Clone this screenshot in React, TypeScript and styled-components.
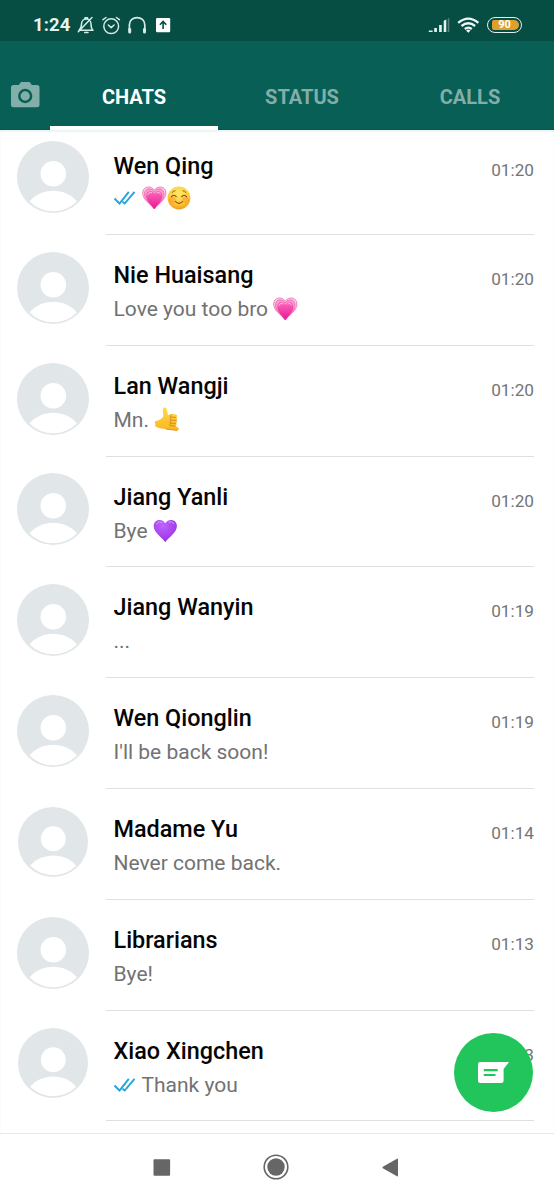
import React from 'react';
import styled, { createGlobalStyle } from 'styled-components';

const GlobalStyle = createGlobalStyle`
  * { box-sizing: border-box; }
  body { margin: 0; background: #fff; font-family: Roboto, "Liberation Sans", sans-serif; }
  svg { display: block; flex: none; overflow: visible; }
`;

const Screen = styled.div`
  position: relative;
  width: 554px;
  height: 1200px;
  display: flex;
  flex-direction: column;
  overflow: hidden;
  background: #fff;
`;

const StatusBar = styled.div`
  flex: none;
  height: 41px;
  padding: 9px 33px 0 33px;
  background: #064d44;
  display: flex;
  justify-content: space-between;
`;

const StatusGroup = styled.div`
  display: flex;
  align-items: center;
  height: 32px;
`;

const Clock = styled.span`
  width: 44px;
  font-size: 18.5px;
  font-weight: 700;
  letter-spacing: 0.1px;
  line-height: 32px;
  color: #e6f4f1;
`;

const Header = styled.header`
  flex: none;
  height: 89px;
  background: #085f55;
  border-bottom: 1px solid #07554c;
  display: flex;
`;

const CameraButton = styled.div`
  width: 50px;
  padding: 41px 0 0 11px;
`;

const Tab = styled.div<{ $active?: boolean }>`
  width: 168px;
  height: 89px;
  padding-top: 44px;
  text-align: center;
  font-size: 20px;
  line-height: 24px;
  font-weight: 700;
  color: ${p => (p.$active ? '#fff' : '#83aea8')};
  border-bottom: 4px solid ${p => (p.$active ? '#fff' : 'transparent')};
  background-clip: padding-box;
`;

const ChatList = styled.main`
  flex: 1;
  min-height: 0;
  overflow: hidden;
  box-shadow: inset 0 2px 2px #eef3f4;
`;

const Row = styled.div<{ $first?: boolean }>`
  height: ${p => (p.$first ? 105 : 110.8)}px;
  padding-left: 17px;
  padding-right: 20px;
  display: flex;
`;

const AvatarSlot = styled.div<{ $first?: boolean }>`
  width: 89px;
  padding-top: ${p => (p.$first ? 11 : 16.8)}px;
`;

const Body = styled.div<{ $first?: boolean }>`
  flex: 1;
  padding: ${p => (p.$first ? 22 : 26)}px 0 0 7.5px;
  display: flex;
  justify-content: space-between;
  border-bottom: 1px solid #dedfe0;
`;

const Name = styled.div`
  font-size: 23.4px;
  line-height: 28px;
  font-weight: 500;
  color: #050505;
  white-space: nowrap;
`;

const Preview = styled.div<{ $first?: boolean }>`
  margin-top: ${p => (p.$first ? 4 : 6)}px;
  height: 28px;
  display: flex;
  align-items: center;
  font-size: 21px;
  line-height: 28px;
  color: #717273;
  white-space: pre;
`;

const Time = styled.time`
  margin-top: 8px;
  font-size: 17.2px;
  line-height: 20px;
  color: #747576;
`;

const ComposeButton = styled.div`
  position: absolute;
  left: 454px;
  top: 1033px;
  width: 79px;
  height: 79px;
  border-radius: 50%;
  background: #22c55b;
  display: flex;
  align-items: center;
  justify-content: center;
`;

const NavBar = styled.nav`
  flex: none;
  height: 67px;
  border-top: 1px solid #e8e8e8;
  display: flex;
  align-items: center;
  justify-content: space-between;
  padding: 0 156px 0 153px;
`;

const Avatar = ({ size = 72 }: { size?: number }) => (
  <svg width={72} height={72} viewBox="0 0 72 72">
    <g transform={`translate(36 36) scale(${size / 72}) translate(-36 -36)`}>
      <circle cx="36" cy="36" r="36" fill="#e1e6e9" />
      <circle cx="36.3" cy="32.7" r="12.8" fill="#fff" />
      <path d="M12.5 60.5C24 46.3 48.5 46.3 60 60.5A34 34 0 0 1 12.5 60.5Z" fill="#fff" />
    </g>
  </svg>
);

const Ticks = () => (
  <svg width="28" height="24" viewBox="0 0 28 24" fill="none" stroke="#24a3dc" strokeWidth="1.9">
    <path d="M0.5 12.5L5.5 17.5L14.8 5.8M8.5 15.7L10.7 17.5L20.5 5.8" />
  </svg>
);

const GrowingHeart = () => (
  <svg width="25" height="24" viewBox="0 0 25 24">
    <defs>
      <linearGradient id="pink" x1="0" y1="0" x2="0" y2="1">
        <stop offset="0" stopColor="#fb69b9" />
        <stop offset="1" stopColor="#e91795" />
      </linearGradient>
    </defs>
    <path d="M12.3 23C9 18 .7 14.2.7 7.1C.7-.1 9.4-.8 12.3 4.3C15.2-.8 23.9-.1 23.9 7.1C23.9 14.2 15.6 18 12.3 23Z" fill="#ffd4ec" stroke="#ed65ae" strokeWidth=".8" />
    <path d="M12.3 23C9 18 2.5 14.5 2.5 8C2.5 1.7 9.8 1.3 12.3 6C14.8 1.3 22.1 1.7 22.1 8C22.1 14.5 15.6 18 12.3 23Z" fill="#fa9bd0" stroke="#ed65ae" strokeWidth=".8" />
    <path d="M12.3 23C9 18.4 4.2 15 4.2 9.7C4.2 4 10.4 3.5 12.3 8C14.2 3.5 20.4 4 20.4 9.7C20.4 15 15.6 18.4 12.3 23Z" fill="url(#pink)" />
    <path d="M5.7 8.8Q7 5.3 10 6.8M14.4 7Q17 5.3 18.7 8" fill="none" stroke="#ffc1e2" strokeWidth="1" />
  </svg>
);

const SmilingFace = () => (
  <svg width="24" height="24" viewBox="0 0 24 24" fill="none" strokeLinecap="round">
    <defs>
      <radialGradient id="face" cx=".5" cy=".3" r=".7">
        <stop offset="0" stopColor="#ffe86c" />
        <stop offset=".65" stopColor="#fecb35" />
        <stop offset="1" stopColor="#f29a1f" />
      </radialGradient>
    </defs>
    <circle cx="12" cy="12" r="11.4" fill="url(#face)" />
    <circle cx="5.3" cy="14" r="3.4" fill="#fa9335" opacity=".5" />
    <circle cx="18.7" cy="14" r="3.4" fill="#fa9335" opacity=".5" />
    <g stroke="#764515" strokeWidth="1.1">
      <path d="M4.5 10.7Q6.9 7.7 9.2 10.7M14.8 10.7Q17.1 7.7 19.5 10.7M8.5 15.5Q12 19.3 15.5 15.5" />
      <path d="M5 6.6Q6.2 4.9 8 4.7M16 4.7Q17.8 4.9 19 6.6" strokeWidth=".8" />
    </g>
  </svg>
);

const CallMeHand = () => (
  <svg width="25" height="25" viewBox="0 0 25 25">
    <defs>
      <linearGradient id="hand" x1="0" y1="0" x2="0" y2="1">
        <stop offset="0" stopColor="#ffda4b" />
        <stop offset="1" stopColor="#fbb622" />
      </linearGradient>
    </defs>
    <path d="M.8 14.2C4 13.8 7.8 12.5 9.3 9.3L8.8 2.3C8.8-.1 12.3-.2 12.7 2L14 8.2C17 6.6 20.7 7 22.2 7.5C23.7 8.2 23.3 10 22 10.3C23.8 11 23.5 13 22.2 13.3C23.7 14.2 23.1 16 21.8 16.4C22.9 17.3 22.4 18.7 21.2 19.1L24 20.5C25.7 21.5 24.7 24 22.6 23.5L13.5 21.9C8.8 22 4 21.4 1.4 19.6Z" fill="url(#hand)" />
    <path d="M22 10.3L17 10.2Q15.3 9.2 17.2 7.6M22.2 13.3L16.9 13.2Q15.4 12.1 17 10.2M21.8 16.4L16.5 16.2Q15.2 15 16.9 13.2M21.2 19.1L16 18.7Q15 17.5 16.5 16.2M12 22L22.6 23.4" fill="none" stroke="#d9861c" strokeWidth=".9" strokeLinecap="round" />
  </svg>
);

const PurpleHeart = () => (
  <svg width="25" height="24" viewBox="0 0 25 24">
    <defs>
      <radialGradient id="purple" cx=".4" cy=".25" r=".75">
        <stop offset="0" stopColor="#bd65fb" />
        <stop offset=".7" stopColor="#a540ed" />
        <stop offset="1" stopColor="#8d31d5" />
      </radialGradient>
    </defs>
    <path d="M12.3 23.2C9 18.6.7 13.8.7 7.1C.7-.1 9.4-.9 12.3 4.3C15.2-.9 23.9-.1 23.9 7.1C23.9 13.8 15.6 18.6 12.3 23.2Z" fill="url(#purple)" />
    <path d="M3 5.3Q5.7 1.4 9.3 3.4M15.5 3.2Q18.9 1.7 21.2 4.8" stroke="#d59aff" strokeWidth="1" fill="none" />
  </svg>
);

const StatusIcons = () => (
  <svg width="96" height="20" viewBox="77 15 96 20" fill="none" stroke="#d5ebe7" strokeWidth="1.5" strokeLinecap="round" strokeLinejoin="round">
    <path d="M79 30.3H93C91 28.5 91 26.8 91 24C91 17.3 81.5 17.3 81.5 24C81.5 27 81 28.7 79 30.3ZM85 18.8V17.7H87.5V18.8M84.7 32.5H88M78.3 31.7L92 17.5" />
    <circle cx="111.2" cy="26.2" r="7.4" />
    <path d="M103 19.7L106 17.5M116.4 17.5L119.4 19.7M108.3 25L111.2 27.6L114.1 25" />
    <path d="M129.4 30V24.8C129.4 15.3 144.8 15.3 144.8 24.8V30" strokeWidth="1.7" />
    <path d="M129.7 29.3V32M144.5 29.3V32" strokeWidth="3" />
    <rect x="156" y="18" width="14.2" height="14.2" rx="1.2" fill="#fff" stroke="none" />
    <path d="M163.1 29V22M159.9 24.8L163.1 21.5L166.3 24.8" stroke="#064d44" strokeWidth="1.6" strokeLinecap="butt" strokeLinejoin="miter" />
  </svg>
);

const SignalIcons = () => (
  <svg width="58" height="20" viewBox="427 15 58 20" fill="none" stroke="#edf8f6">
    <path d="M427.8 32V30.5H431.6V32ZM433.2 32V27.9H435.9V32ZM438.1 32V25H440.8V32ZM442.7 32V20.8L445.3 19.5V32Z" fill="#e2f3f0" stroke="none" />
    <path d="M446.7 19L448.3 17.8V32H446.7Z" fill="#55857e" stroke="none" />
    <path d="M457.2 22.8Q467.3 14.4 477.4 22.8M460.5 26Q467.3 20.5 474.1 26M463.8 29Q467.3 26.2 470.8 29" strokeWidth="2.3" />
    <path d="M465.1 30.4Q467.3 28.8 469.5 30.4L467.3 32.7Z" fill="#fff" stroke="none" />
  </svg>
);

const BatteryShell = styled.div`
  margin-left: 1px;
  margin-right: -1px;
  width: 35px;
  height: 16px;
  border: 1.5px solid #e2f0ec;
  border-radius: 8px;
  padding: 2px 2px 2px 4px;
  display: flex;
`;

const BatteryLevel = styled.div`
  flex: 1;
  border-radius: 2px 5px 5px 2px;
  background: #dfa02b;
  color: #fff;
  font-size: 11px;
  font-weight: 700;
  line-height: 10px;
  padding-right: 2px;
  text-align: center;
`;

interface Chat {
  name: string;
  time: string;
  preview: React.ReactNode;
  avatar?: number;
}

const chats: Chat[] = [
  { name: 'Wen Qing', time: '01:20', preview: <><Ticks /><GrowingHeart /><SmilingFace /></> },
  { name: 'Nie Huaisang', time: '01:20', preview: <>{'Love you too bro '}<GrowingHeart /></> },
  { name: 'Lan Wangji', time: '01:20', preview: <>{'Mn. '}<CallMeHand /></> },
  { name: 'Jiang Yanli', time: '01:20', preview: <>{'Bye '}<PurpleHeart /></> },
  { name: 'Jiang Wanyin', time: '01:19', preview: '...' },
  { name: 'Wen Qionglin', time: '01:19', preview: "I'll be back soon!" },
  { name: 'Madame Yu', time: '01:14', preview: 'Never come back.', avatar: 70 },
  { name: 'Librarians', time: '01:13', preview: 'Bye!' },
  { name: 'Xiao Xingchen', time: '01:13', preview: <><Ticks />Thank you</>, avatar: 70 },
];

export default function App() {
  return (
    <Screen>
      <GlobalStyle />
      <StatusBar>
        <StatusGroup>
          <Clock>1:24</Clock>
          <StatusIcons />
        </StatusGroup>
        <StatusGroup>
          <SignalIcons />
          <BatteryShell><BatteryLevel>90</BatteryLevel></BatteryShell>
        </StatusGroup>
      </StatusBar>
      <Header>
        <CameraButton>
          <svg width="29" height="26" viewBox="0 0 29 26">
            <path d="M2.5 3H7.8L10 0H18.6L20.8 3H26Q28.5 3 28.5 5.5V22.7Q28.5 25.2 26 25.2H2.5Q0 25.2 0 22.7V5.5Q0 3 2.5 3Z" fill="#84aea9" />
            <circle cx="14.2" cy="14" r="5.9" fill="none" stroke="#085f55" strokeWidth="2.5" />
          </svg>
        </CameraButton>
        <Tab $active>CHATS</Tab>
        <Tab>STATUS</Tab>
        <Tab>CALLS</Tab>
      </Header>
      <ChatList>
        {chats.map((chat, i) => (
          <Row key={chat.name} $first={i === 0}>
            <AvatarSlot $first={i === 0}><Avatar size={chat.avatar} /></AvatarSlot>
            <Body $first={i === 0}>
              <div>
                <Name>{chat.name}</Name>
                <Preview $first={i === 0}>{chat.preview}</Preview>
              </div>
              <Time>{chat.time}</Time>
            </Body>
          </Row>
        ))}
      </ChatList>
      <NavBar>
        <svg width="17" height="17" viewBox="0 0 17 17"><rect x=".5" y=".2" width="16.6" height="16.6" rx="1" fill="#666" /></svg>
        <svg width="26" height="26" viewBox="0 0 26 26">
          <circle cx="13" cy="13" r="11.8" fill="none" stroke="#666" strokeWidth="1.6" />
          <circle cx="13" cy="13" r="8.7" fill="#666" />
        </svg>
        <svg width="16" height="19" viewBox="0 0 16 19"><path d="M.8 8.8Q0 9.5.8 10.2L15 18.3Q16 18.8 16 17.7V1.3Q16 .2 15 .7Z" fill="#666" /></svg>
      </NavBar>
      <ComposeButton>
        <svg width="31" height="21" viewBox="0 0 31 21">
          <path d="M2.3 0H31L25.6 7V18.7Q25.6 21 23.3 21H2.3Q0 21 0 18.7V2.3Q0 0 2.3 0Z" fill="#fff" />
          <path d="M5.8 8.1H19.7M5.8 13H17.5" stroke="#22c55b" strokeWidth="2.2" />
        </svg>
      </ComposeButton>
    </Screen>
  );
}
